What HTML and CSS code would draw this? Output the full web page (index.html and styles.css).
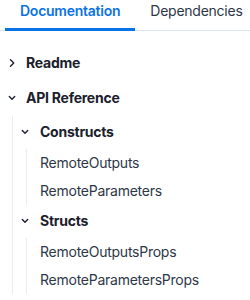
FILE: index.html
```html
<!DOCTYPE html>
<html>
<head>
  <meta charset="UTF-8">
  <link rel="stylesheet" href="styles.css">
</head>
<body>
  <div class="tabs">
    <div class="tab tab-active">Documentation</div>
    <div class="tab">Dependencies</div>
  </div>

  <div class="nav">
    <div class="nav-row">
      <svg class="chev" width="12" height="12" viewBox="0 0 12 12"><path d="M4.5 2.8 L7.7 6 L4.5 9.2"/></svg>
      <span class="nav-title">Readme</span>
    </div>

    <div class="nav-row">
      <svg class="chev" width="12" height="12" viewBox="0 0 12 12"><path d="M3.3 4.6 L6 7.3 L8.7 4.6"/></svg>
      <span class="nav-title">API Reference</span>
    </div>

    <div class="nav-group">
      <div class="sub-row">
        <svg class="chev" width="12" height="12" viewBox="0 0 12 12"><path d="M3.3 4.6 L6 7.3 L8.7 4.6"/></svg>
        <span class="nav-title">Constructs</span>
      </div>
      <div class="sub-group">
        <div class="leaf">RemoteOutputs</div>
        <div class="leaf">RemoteParameters</div>
      </div>

      <div class="sub-row">
        <svg class="chev" width="12" height="12" viewBox="0 0 12 12"><path d="M3.3 4.6 L6 7.3 L8.7 4.6"/></svg>
        <span class="nav-title">Structs</span>
      </div>
      <div class="sub-group">
        <div class="leaf">RemoteOutputsProps</div>
        <div class="leaf">RemoteParametersProps</div>
      </div>
    </div>
  </div>
</body>
</html>
```

FILE: styles.css
```css
body{
  margin: 0;
  background-color: white;
  font-family: Inter, "Noto Sans", sans-serif;
  font-size: 14px;
  line-height: 20px;
  letter-spacing: -0.25px;
  color: #2d3748;
}
.tabs{
  display: flex;
  padding-left: 5px;
  border-bottom: 1px solid #e2e8f0;
}
.tab{
  padding: 1px 15px 7px;
  border-bottom: 3px solid transparent;
  margin-bottom: -1px;
  color: #2d3748;
}
.tab-active{
  color: #0b72e5;
  font-weight: 600;
  border-bottom-color: #0b72e5;
}
.nav{
  padding: 15px 0 0 6px;
}
.nav-row{
  display: flex;
  align-items: center;
  padding: 7px 0 8px;
}
.chev{
  flex: none;
  fill: none;
  stroke: #1a202c;
  stroke-width: 1.4;
  stroke-linecap: round;
  stroke-linejoin: round;
}
.nav-row .chev{
  margin-right: 8px;
}
.nav-title{
  font-weight: 700;
  color: #1a202c;
}
.nav-group{
  margin-left: 6px;
  border-left: 1px solid #e9edf2;
}
.sub-row{
  display: flex;
  align-items: center;
  padding: 6px 0 7px 6px;
}
.sub-row .chev{
  margin-right: 9px;
}
.sub-group{
  margin-left: 13px;
  border-left: 1px solid #e9edf2;
}
.leaf{
  padding: 4px 0 4px 13px;
  color: #2d3748;
}
```
